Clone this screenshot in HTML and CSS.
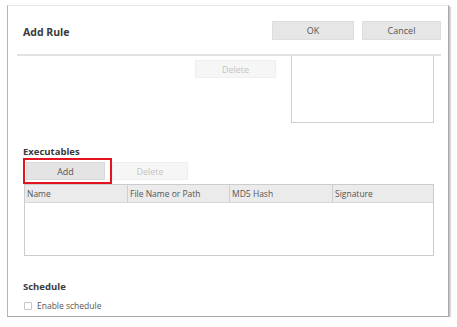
FILE: index.html
```html
<!DOCTYPE html>
<html lang="en">
<head>
  <meta charset="UTF-8" />
  <title>Add Rule</title>
  <link rel="stylesheet" href="styles.css">
</head>
<body>

  <div class="dialog">

    <!-- Header with title and actions -->
    <div class="dialog-head">
      <h1>Add Rule</h1>
      <div class="head-actions">
        <button class="btn btn-ok">OK</button>
        <button class="btn btn-cancel">Cancel</button>
      </div>
    </div>

    <!-- Upper list (scrolled) -->
    <div class="upper">
      <button class="btn btn-off btn-del-top">Delete</button>
      <div class="upper-box"></div>
    </div>

    <!-- Executables -->
    <div class="section exec">
      <h2>Executables</h2>
      <div class="exec-actions">
        <span class="highlight"><button class="btn btn-add">Add</button></span>
        <button class="btn btn-off btn-del">Delete</button>
      </div>
      <div class="grid">
        <div class="grid-head">
          <div class="col">Name</div>
          <div class="col">File Name or Path</div>
          <div class="col">MD5 Hash</div>
          <div class="col">Signature</div>
        </div>
        <div class="grid-body"></div>
      </div>
    </div>

    <!-- Schedule -->
    <div class="section schedule">
      <h2>Schedule</h2>
      <label class="check"><span class="box"></span>Enable schedule</label>
    </div>

  </div>

</body>
</html>
```

FILE: styles.css
```css
* { margin: 0; padding: 0; box-sizing: border-box; }

body {
  background: white;
  color: #444;
  font-family: 'Open Sans', 'DejaVu Sans', sans-serif;
  font-size: 8.5px;
}

.dialog {
  margin: 5px 0 0 7px;
  width: 442px;
  height: 312px;
  background: white;
  border: 1px solid #e6e6e6;
  border-left-color: #b5b5b5;
  border-right-color: #a8a8a8;
  border-bottom-color: #a8a8a8;
  box-shadow: 1px 1px 0 #c8c8c8, 2px 2px 1px #dcdcdc;
  display: flex;
  flex-direction: column;
}

.dialog-head {
  height: 50px;
  margin: 0 7px 0 9px;
  padding-left: 6px;
  border-bottom: 2px solid #e2e2e2;
  display: flex;
  align-items: center;
  justify-content: space-between;
}

h1 {
  font-size: 10.5px;
  font-weight: bold;
  color: #3a3a3a;
  margin-top: 3px;
}

.head-actions {
  display: flex;
  gap: 8px;
  margin-top: 1px;
}

.btn {
  font-family: inherit;
  font-size: 9px;
  color: #555;
  background: #e6e6e6;
  border: 1px solid #dedede;
  height: 19px;
  cursor: pointer;
}

.btn-ok { width: 82px; }
.btn-cancel { width: 79px; }

.btn-off {
  background: #f6f6f6;
  border-color: #efefef;
  color: #c4c4c4;
}

.upper {
  display: flex;
  justify-content: flex-end;
  gap: 15px;
  margin-right: 14px;
  height: 67px;
}

.btn-del-top {
  width: 81px;
  height: 18px;
  margin-top: 4px;
}

.upper-box {
  width: 143px;
  border: 1px solid #cfcfcf;
  border-top: none;
}

.section {
  padding-left: 15px;
}

h2 {
  font-size: 9.5px;
  font-weight: bold;
  color: #3a3a3a;
  line-height: 12px;
}

.exec { margin-top: 23px; }

.exec-actions {
  display: flex;
}

.highlight {
  display: flex;
  border: 2px solid #e3141f;
  padding: 2px 5px 2px 1px;
  width: 89px;
  height: 26px;
}

.btn-add {
  width: 79px;
  height: 18px;
  background: #e4e4e4;
  border-color: #d9d9d9;
}

.btn-del {
  width: 76px;
  height: 18px;
  margin-top: 4px;
}

.grid {
  margin-left: 1px;
  width: 410px;
  border: 1px solid #cccccc;
}

.grid-head {
  display: grid;
  grid-template-columns: 102px 102px 103px 1fr;
  height: 18px;
  background: #ebebeb;
  border-bottom: 1px solid #d6d6d6;
}

.col {
  padding-left: 2px;
  line-height: 17px;
  color: #555;
  border-left: 1px solid #cfcfcf;
}

.col:first-child { border-left: none; }

.grid-body { height: 52px; }

.schedule { margin-top: 25px; }

.check {
  display: flex;
  align-items: center;
  gap: 5px;
  margin-top: 7px;
  margin-left: 1px;
  color: #555;
}

.box {
  width: 8px;
  height: 8px;
  border: 1px solid #c6c6c6;
  border-radius: 1px;
}
```
